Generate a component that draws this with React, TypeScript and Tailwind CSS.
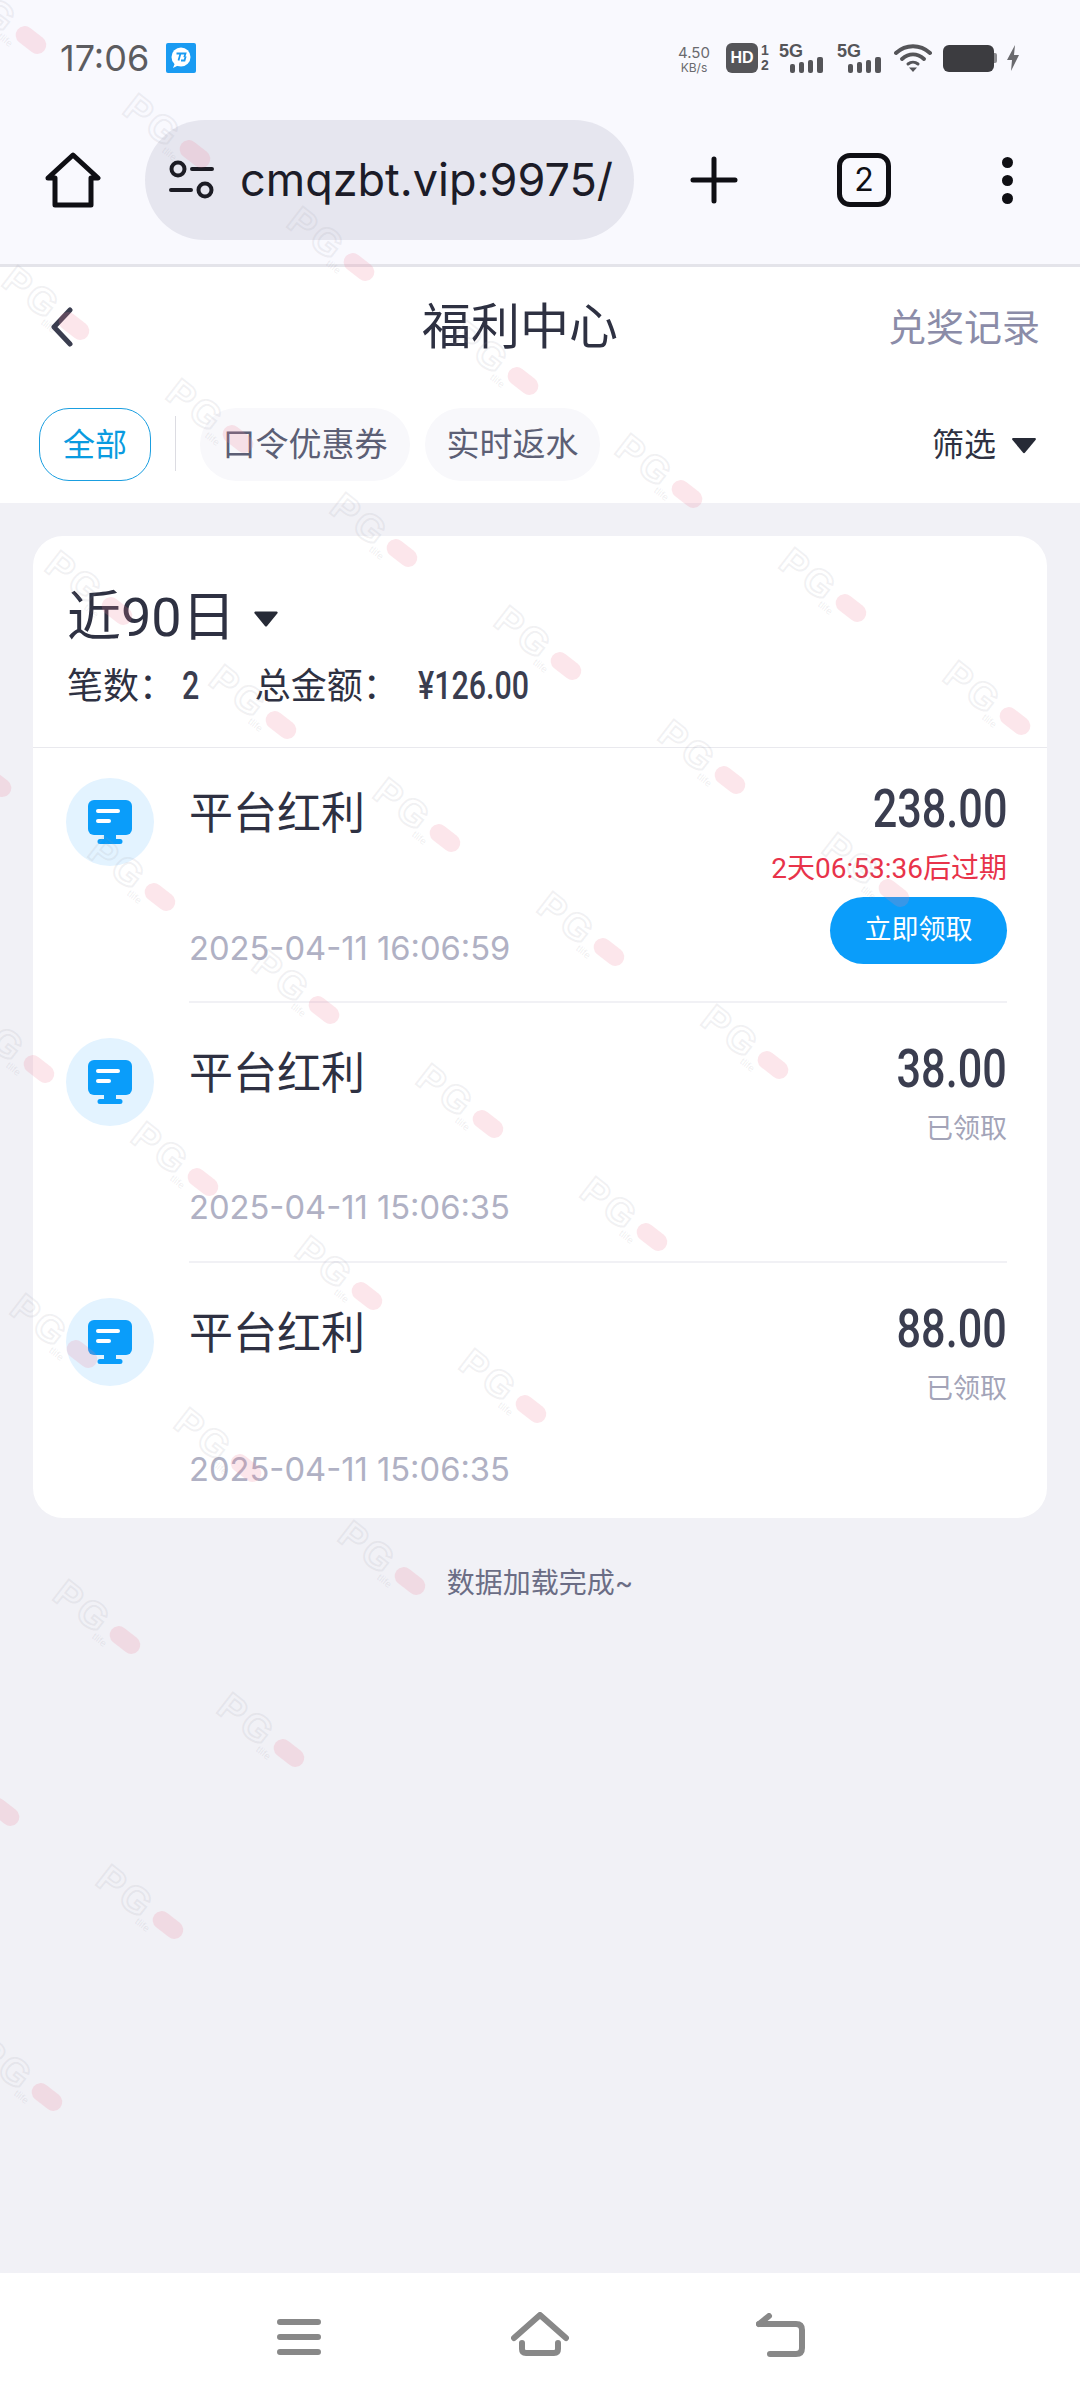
const CONDENSED = "font-['Roboto',sans-serif] font-medium"

const records = [
  { amount: "238.00", time: "2025-04-11 16:06:59", pending: true },
  { amount: "38.00", time: "2025-04-11 15:06:35", pending: false },
  { amount: "88.00", time: "2025-04-11 15:06:35", pending: false },
]

// tiled brand stamp, laid on a skewed lattice that stops short of the lower right
const stamps: { x: number; y: number }[] = []
for (let j = 0; j <= 8; j++) {
  for (let i = 0; i <= 6; i++) {
    const x = 31 + i * 164 - j * 121
    const y = 40 + i * 113.5 + j * 172
    if (x > -40 && x < 1120) stamps.push({ x, y })
  }
}

const Stamp = ({ x, y }: { x: number; y: number }) => (
  <div
    className="absolute w-[110px] h-[30px] origin-[90px_15px] rotate-[38deg] flex items-center"
    style={{ left: x - 90, top: y - 15 }}
  >
    <span className="ml-[6px] text-[38px] leading-[30px] font-bold tracking-[3px] text-transparent [-webkit-text-stroke:2px_rgba(150,150,165,0.13)] font-['Liberation_Sans',sans-serif]">
      PG
    </span>
    <span className="absolute left-[73px] top-[6px] w-[34px] h-[18px] rounded-full bg-[#f0839c]/20" />
    <span className="absolute left-[62px] top-[26px] text-[10px] leading-[10px] text-[#8a8a9a]/15 font-['Liberation_Sans',sans-serif]">
      tlife
    </span>
  </div>
)

const SignalBars = () => (
  <svg width="34" height="16" viewBox="0 0 34 16" className="-ml-[13px] mt-[14px]">
    <rect x="0" y="7" width="5" height="9" rx="2" fill="#555559" />
    <rect x="9" y="5" width="5" height="11" rx="2" fill="#555559" />
    <rect x="18" y="3" width="5" height="13" rx="2" fill="#555559" />
    <rect x="27" y="0" width="6" height="16" rx="2" fill="#555559" />
  </svg>
)

const StatusBar = () => (
  <div className="h-[116px] flex items-center pl-[60px] text-[#5c5c60]">
    <span className="w-[106px] text-[36px] leading-[40px] font-['Inter',sans-serif]">17:06</span>
    <svg width="30" height="30" viewBox="0 0 30 30">
      <rect width="30" height="30" rx="2" fill="#1a9bf2" />
      <circle cx="15" cy="14" r="9.500" fill="#fff" />
      <path d="M9 20l-2 5 6-3z" fill="#fff" />
      <path d="M10.500 10.500h4l-2 7M15 10.500h4.500l-1 3 1 .5-1 3.500H15" stroke="#1a9bf2" strokeWidth="1.800" fill="none" />
    </svg>
    <div className="ml-[479px] w-[38px] flex flex-col items-center font-['Inter',sans-serif] text-[#6a6a6e]">
      <span className="text-[15px] leading-[17px] mt-[2px]">4.50</span>
      <span className="text-[12px] leading-[13px]">KB/s</span>
    </div>
    <div className="ml-[13px] w-[32px] h-[30px] rounded-[6px] bg-[#555559] flex items-center justify-center text-white text-[16px] font-bold leading-none font-['Liberation_Sans',sans-serif]">
      HD
    </div>
    <div className="ml-[2px] w-[10px] flex flex-col items-center text-[14px] leading-[15px] font-bold text-[#555559] font-['Liberation_Sans',sans-serif]">
      <span>1</span>
      <span>2</span>
    </div>
    <span className="ml-[9px] self-center -mt-[15px] text-[18px] leading-[16px] font-bold text-[#555559] font-['Liberation_Sans',sans-serif]">
      5G
    </span>
    <SignalBars />
    <span className="ml-[13px] self-center -mt-[15px] text-[18px] leading-[16px] font-bold text-[#555559] font-['Liberation_Sans',sans-serif]">
      5G
    </span>
    <SignalBars />
    <svg width="38" height="28" viewBox="0 0 38 28" className="ml-[12px]" fill="none" stroke="#555559" strokeWidth="4" strokeLinecap="round">
      <path d="M2 9C12 0 26 0 36 9" />
      <path d="M8 15c7-6 15-6 22 0" />
      <path d="M14 20c3-2.500 7-2.500 10 0" strokeWidth="3" />
      <path d="M15 23.500h8L19 28z" fill="#555559" stroke="none" />
    </svg>
    <div className="ml-[11px] w-[51px] h-[27px] rounded-[6px] bg-[#3c3c40]" />
    <div className="w-[3px] h-[10px] rounded-r-[2px] bg-[#8c8c90]" />
    <svg width="12" height="26" viewBox="0 0 12 26" className="ml-[10px]">
      <path d="M8 0L0 15h5l-1 11 8-16H7z" fill="#6a6a6e" />
    </svg>
  </div>
)

const ChromeBar = () => (
  <div className="flex items-center h-[120px] mt-[4px]">
    <div className="w-[145px] flex justify-center">
      <svg width="56" height="56" viewBox="0 0 56 56" fill="none" stroke="#0f0f14" strokeWidth="5" strokeLinejoin="round" strokeLinecap="round">
        <path d="M3 26L28 3l25 23h-7v27H10V26z" />
      </svg>
    </div>
    <div className="w-[489px] h-[120px] rounded-full bg-[#e6e6ef] flex items-center pl-[24px] overflow-hidden">
      <svg width="46" height="40" viewBox="0 0 46 40" fill="none" stroke="#1c1c24" strokeWidth="4" className="shrink-0">
        <circle cx="9" cy="9" r="6.500" />
        <path d="M23 9h20M2 30h20" strokeLinecap="round" />
        <circle cx="36" cy="30" r="6.500" />
      </svg>
      <span className="ml-[25px] text-[45px] leading-[60px] whitespace-nowrap text-[#1c1c28] font-['Inter',sans-serif]">
        cmqzbt.vip:9975/
      </span>
    </div>
    <div className="w-[160px] flex justify-center">
      <svg width="48" height="48" viewBox="0 0 48 48" stroke="#0f0f14" strokeWidth="5" strokeLinecap="round">
        <path d="M24 3v42M3 24h42" />
      </svg>
    </div>
    <div className="w-[140px] flex justify-center">
      <div className="w-[54px] h-[54px] rounded-[13px] border-[5px] border-[#0f0f14] flex items-center justify-center text-[32px] leading-none text-[#0f0f14] font-['Inter',sans-serif]">
        2
      </div>
    </div>
    <div className="w-[146px] flex flex-col items-center gap-[7px]">
      <div className="w-[11px] h-[11px] rounded-full bg-[#0f0f14]" />
      <div className="w-[11px] h-[11px] rounded-full bg-[#0f0f14]" />
      <div className="w-[11px] h-[11px] rounded-full bg-[#0f0f14]" />
    </div>
  </div>
)

const Caret = ({ className }: { className: string }) => (
  <svg viewBox="0 0 24 16" className={className}>
    <path d="M2 1.500h20a1 1 0 0 1 .8 1.600L13 15a1.300 1.300 0 0 1-2 0L1.200 3.100A1 1 0 0 1 2 1.500z" fill="#262a36" />
  </svg>
)

const PageHeader = () => (
  <div className="bg-white">
    <div className="h-[120px] flex items-center pl-[49px] pr-[40px]">
      <svg width="24" height="40" viewBox="0 0 24 40" fill="none" stroke="#3a3d4f" strokeWidth="5" strokeLinecap="round" strokeLinejoin="round">
        <path d="M21 3L5 20l16 17" />
      </svg>
      <h1 className="ml-[349px] text-[49px] leading-[60px] text-[#2e3142]">福利中心</h1>
      <span className="ml-auto text-[38px] leading-[50px] text-[#8b8ca8]">兑奖记录</span>
    </div>
    <div className="h-[116px] flex items-start pt-[21px] pl-[39px] pr-[43px]">
      <div className="w-[112px] h-[73px] rounded-[30px] border border-[#1a9ee0] flex items-center justify-center text-[32px] text-[#0a9be0]">
        全部
      </div>
      <div className="ml-[24px] mt-[8px] w-px h-[55px] bg-[#dcdce2]" />
      <div className="ml-[24px] w-[210px] h-[73px] rounded-full bg-[#f8f8fb] flex items-center justify-center text-[33px] text-[#5c5f75]">
        口令优惠券
      </div>
      <div className="ml-[15px] w-[175px] h-[73px] rounded-full bg-[#f8f8fb] flex items-center justify-center text-[33px] text-[#5c5f75]">
        实时返水
      </div>
      <div className="ml-auto h-[73px] flex items-center text-[32px] text-[#2e3142]">
        筛选
        <Caret className="ml-[15px] w-[26px] h-[18px]" />
      </div>
    </div>
  </div>
)

const RewardIcon = () => (
  <div className="w-[88px] h-[88px] rounded-full bg-[#e3f3ff] flex items-center justify-center shrink-0">
    <svg width="44" height="44" viewBox="0 0 44 44">
      <rect x="0" y="0" width="44" height="35" rx="6" fill="#0a9dfa" />
      <path d="M16 35h12v4h4a2.500 2.500 0 0 1 0 5H12a2.500 2.500 0 0 1 0-5h4z" fill="#0a9dfa" />
      <rect x="8" y="9" width="24" height="4" rx="2" fill="#fff" />
      <rect x="8" y="19" width="15" height="4" rx="2" fill="#fff" />
    </svg>
  </div>
)

const RecordRow = ({ amount, time, pending, first, last }: { amount: string; time: string; pending: boolean; first: boolean; last: boolean }) => (
  <div className={first ? "flex pl-[33px] h-[255px]" : "flex pl-[33px] h-[260px]"}>
    <div className={first ? "pt-[30px]" : "pt-[35px]"}>
      <RewardIcon />
    </div>
    <div className={last ? "ml-[35px] mr-[40px] flex-1 flex" : "ml-[35px] mr-[40px] flex-1 flex border-b-2 border-[#f1f1f5]"}>
      <div className={first ? "flex-1 flex flex-col" : "flex-1 flex flex-col pt-[5px]"}>
        <span className="text-[44px] leading-[56px] text-[#2e3142] mt-[37px]">平台红利</span>
        <span className={`mt-auto ${first ? "mb-[33px]" : "mb-[34px]"} text-[32.7px] leading-[40px] text-[#b0b1c4] font-['Inter',sans-serif]`}>{time}</span>
      </div>
      <div className={first ? "flex flex-col items-end pt-[31px]" : "flex flex-col items-end pt-[36px]"}>
        <span className={`${CONDENSED} text-[54px] leading-[60px] text-[#3a3d4f] scale-x-[0.8] origin-right`}>{amount}</span>
        {pending ? (
          <>
            <span className="mt-[12px] text-[28px] leading-[36px] text-[#e8334a] font-['Roboto','Noto_Sans_CJK_SC',sans-serif]">2天06:53:36后过期</span>
            <button className="mt-[10px] w-[177px] h-[67px] rounded-full bg-[#0a9dfa] text-white text-[27px]">立即领取</button>
          </>
        ) : (
          <span className="mt-[12px] text-[27px] leading-[36px] text-[#a3a4b8]">已领取</span>
        )}
      </div>
    </div>
  </div>
)

const BottomNav = () => (
  <div className="relative z-10 h-[127px] bg-white flex justify-center">
    <div className="flex items-start pt-[46px] gap-[190px] ml-[3px]">
      <svg width="44" height="36" viewBox="0 0 44 36" stroke="#888" strokeWidth="6" strokeLinecap="round">
        <path d="M3 3h38M3 18h38M3 33h38" />
      </svg>
      <svg width="58" height="44" viewBox="0 0 58 44" fill="none" stroke="#888" strokeWidth="6" strokeLinecap="round" strokeLinejoin="round" className="-mt-[7px]">
        <path d="M3 26L29 3l26 23" />
        <path d="M11 31v6q0 4 4 4h28q4 0 4-4v-6" />
      </svg>
      <svg width="50" height="44" viewBox="0 0 50 44" fill="none" stroke="#888" strokeWidth="6" strokeLinecap="round" strokeLinejoin="round" className="-ml-[3px] -mt-[6px]">
        <path d="M3 11h37q6 0 6 6v18q0 6-6 6H14" />
        <path d="M3 11l10-8" />
      </svg>
    </div>
  </div>
)

export default function App() {
  return (
    <div className="relative w-[1080px] h-[2400px] overflow-hidden flex flex-col bg-[#f1f1f6] font-['Inter','Noto_Sans_CJK_SC',sans-serif]">
      <div className="h-[267px] bg-[#f9f9fe] border-b-[3px] border-[#e4e4ea]">
        <StatusBar />
        <ChromeBar />
      </div>
      <PageHeader />
      <div className="flex-1 pt-[33px] px-[33px]">
        <div className="rounded-[30px] bg-white h-[982px]">
          <div className="h-[212px] border-b border-[#e9e9ee] pl-[34px] pt-[47px]">
            <div className="flex items-center h-[70px]">
              <span className="text-[54px] leading-[70px] text-[#2e3142] font-['Roboto','Noto_Sans_CJK_SC',sans-serif]">近90日</span>
              <Caret className="ml-[17px] w-[26px] h-[17px]" />
            </div>
            <div className="mt-[9px] flex items-center text-[36px] leading-[48px] text-[#2e3142]">
              <span>笔数：</span>
              <span className={`${CONDENSED} ml-[7px] text-[38px] text-[#3a3d4f] scale-x-[0.8] origin-left`}>2</span>
              <span className="ml-[51px]">总金额：</span>
              <span className={`${CONDENSED} ml-[19px] text-[38px] text-[#3a3d4f] scale-x-[0.8] origin-left`}>¥126.00</span>
            </div>
          </div>
          {records.map((r, i) => (
            <RecordRow key={i} {...r} first={i === 0} last={i === records.length - 1} />
          ))}
        </div>
        <p className="mt-[47px] text-center text-[28px] leading-[36px] text-[#6b6d85]">数据加载完成~</p>
      </div>
      <BottomNav />
      <div className="absolute inset-0 pointer-events-none overflow-hidden">
        {stamps.map((s) => (
          <Stamp key={`${s.x}-${s.y}`} x={s.x} y={s.y} />
        ))}
      </div>
    </div>
  )
}
